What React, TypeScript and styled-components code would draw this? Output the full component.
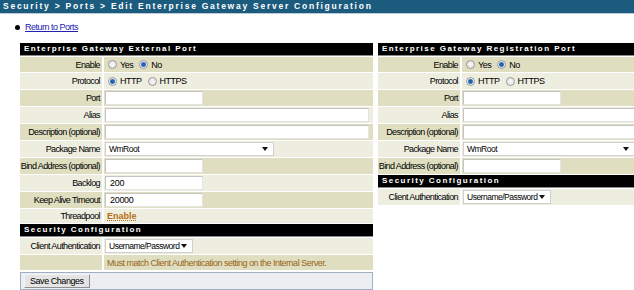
import React from "react";
import styled, { createGlobalStyle } from "styled-components";

const Global = createGlobalStyle`
  html, body { margin: 0; padding: 0; background: #fff; overflow: hidden; }
  body { font-family: "Liberation Sans", Arial, sans-serif; font-size: 9px; color: #000; }
`;

const Page = styled.div`
  width: 634px;
  height: 290px;
  overflow: hidden;
`;

const TopBar = styled.div`
  height: 13px;
  line-height: 13px;
  background: #1b5b7e;
  border-bottom: 1px solid #b8ccd8;
  color: #fff;
  font-weight: bold;
  font-size: 8.5px;
  letter-spacing: 1.75px;
  padding-left: 3px;
  white-space: nowrap;
`;

const LinkRow = styled.div`
  display: flex;
  align-items: center;
  gap: 5px;
  margin: 8px 0 0 15px;
  height: 10px;
`;

const Bullet = styled.span`
  width: 5px;
  height: 5px;
  border-radius: 50%;
  background: #000;
`;

const Link = styled.a`
  color: #2020b0;
  text-decoration: underline;
  letter-spacing: -0.5px;
`;

const Columns = styled.div`
  display: flex;
  gap: 5px;
  margin: 11px 0 0 20px;
  align-items: flex-start;
`;

const LeftCol = styled.div`
  display: flex;
  flex-direction: column;
  width: 353px;
  flex: none;
`;

const Table = styled.div`
  display: flex;
  flex-direction: column;
  gap: 1px;
  width: 353px;
  flex: none;
`;

const Header = styled.div`
  height: 12px;
  line-height: 12px;
  background: #000;
  border-bottom: 1px solid #8a8a8a;
  color: #fff;
  font-weight: bold;
  font-size: 8px;
  letter-spacing: 1.45px;
  padding-left: 4px;
  white-space: nowrap;
`;

const Row = styled.div<{ $h?: number }>`
  display: grid;
  grid-template-columns: 82px 1fr;
  column-gap: 2px;
  height: ${(p) => p.$h ?? 16}px;
`;

const Label = styled.div<{ $dark: boolean }>`
  background: ${(p) => (p.$dark ? "#dfdec1" : "#eeeee0")};
  padding-right: 2px;
  display: flex;
  align-items: center;
  justify-content: flex-end;
  white-space: nowrap;
  letter-spacing: -0.6px;
`;

const Value = styled.div<{ $dark: boolean }>`
  background: ${(p) => (p.$dark ? "#dfdec1" : "#eeeee0")};
  display: flex;
  align-items: center;
  padding-left: 1px;
  gap: 3px;
  white-space: nowrap;
  letter-spacing: -0.5px;
`;

const TextInput = styled.div<{ $w?: number }>`
  box-sizing: border-box;
  height: 14px;
  width: ${(p) => (p.$w ? `${p.$w}px` : "calc(100% - 4px)")};
  background: #fff;
  border: 1px solid #c4c4c4;
  border-right-color: #e4e4e4;
  border-bottom-color: #e4e4e4;
  padding-left: 4px;
  display: flex;
  align-items: center;
  letter-spacing: -0.3px;
`;

const Select = styled.div<{ $w: number }>`
  box-sizing: border-box;
  height: 14px;
  width: ${(p) => p.$w}px;
  background: #fff;
  border: 1px solid #d0d0d0;
  padding: 0 5px 0 3px;
  display: flex;
  align-items: center;
  justify-content: space-between;
  font-size: 8.5px;
  letter-spacing: -0.5px;
`;

const Arrow = styled.span`
  flex: none;
  width: 0;
  height: 0;
  border-left: 3px solid transparent;
  border-right: 3px solid transparent;
  border-top: 4px solid #111;
`;

const RadioWrap = styled.span<{ $first?: boolean }>`
  display: inline-flex;
  align-items: center;
  gap: 3px;
  margin-left: ${(p) => (p.$first ? 3 : 0)}px;
  margin-right: 3px;
`;

const Radio = styled.span<{ $on: boolean }>`
  box-sizing: border-box;
  width: 9px;
  height: 9px;
  border-radius: 50%;
  border: 1px solid #9a9a9a;
  background: radial-gradient(circle at 50% 50%, ${(p) =>
    p.$on ? "#2b6cc4 0, #1f55a8 1.8px, #9fc3ea 2.6px, #f4f4f4 3.2px" : "#f8f8f8 0, #e2e2e2 4px"});
`;

const Orange = styled.span`
  color: #b36d14;
  font-weight: bold;
  text-decoration: underline dotted;
  margin-left: 2px;
  letter-spacing: 0;
`;

const Note = styled.span`
  color: #9a6415;
  margin-left: 2px;
`;

const SaveBar = styled.div`
  margin-top: 2px;
  height: 18px;
  box-sizing: border-box;
  background: #eceef2;
  border: 1px solid #9fb0c6;
  display: flex;
  align-items: center;
  padding-left: 3px;
`;

const Button = styled.div`
  box-sizing: border-box;
  height: 14px;
  padding: 0 5px;
  background: #e4e4e4;
  border: 1px solid #8f8f8f;
  border-top-color: #f4f4f4;
  border-left-color: #f4f4f4;
  display: flex;
  align-items: center;
  letter-spacing: -0.45px;
`;

function Radios({ a, b, sel }: { a: string; b: string; sel: 0 | 1 }) {
  return (
    <>
      <RadioWrap $first>
        <Radio $on={sel === 0} />
        {a}
      </RadioWrap>
      <RadioWrap>
        <Radio $on={sel === 1} />
        {b}
      </RadioWrap>
    </>
  );
}

type R = { label: string; content: React.ReactNode; h?: number };

function Rows({ rows, start = true }: { rows: R[]; start?: boolean }) {
  return (
    <>
      {rows.map((r, i) => {
        const dark = start ? i % 2 === 0 : i % 2 === 1;
        return (
          <Row key={i} $h={r.h}>
            <Label $dark={dark}>{r.label}</Label>
            <Value $dark={dark}>{r.content}</Value>
          </Row>
        );
      })}
    </>
  );
}

function PortRows(selectWidth: number): R[] {
  return [
    { label: "Enable", content: <Radios a="Yes" b="No" sel={1} />, h: 15 },
    { label: "Protocol", content: <Radios a="HTTP" b="HTTPS" sel={0} /> },
    { label: "Port", content: <TextInput $w={98} /> },
    { label: "Alias", content: <TextInput /> },
    { label: "Description (optional)", content: <TextInput /> },
    {
      label: "Package Name",
      content: (
        <Select $w={selectWidth}>
          WmRoot
          <Arrow />
        </Select>
      ),
    },
    { label: "Bind Address (optional)", content: <TextInput $w={98} /> },
  ];
}

const AuthSelect = () => (
  <Select $w={88}>
    Username/Password
    <Arrow />
  </Select>
);

export default function App() {
  const leftRows: R[] = [
    ...PortRows(169),
    { label: "Backlog", content: <TextInput $w={98}>200</TextInput> },
    { label: "Keep Alive Timeout", content: <TextInput $w={98}>20000</TextInput> },
    { label: "Threadpool", content: <Orange>Enable</Orange>, h: 14 },
  ];
  const rightRows: R[] = PortRows(172);
  return (
    <Page>
      <Global />
      <TopBar>Security &gt; Ports &gt; Edit Enterprise Gateway Server Configuration</TopBar>
      <LinkRow>
        <Bullet />
        <Link href="#">Return to Ports</Link>
      </LinkRow>
      <Columns>
        <LeftCol>
          <Table>
            <Header>Enterprise Gateway External Port</Header>
            <Rows rows={leftRows} />
            <Header>Security Configuration</Header>
            <Rows
              start={false}
              rows={[
                { label: "Client Authentication", content: <AuthSelect /> },
                {
                  label: "",
                  content: <Note>Must match Client Authentication setting on the Internal Server.</Note>,
                  h: 15,
                },
              ]}
            />
          </Table>
          <SaveBar>
            <Button>Save Changes</Button>
          </SaveBar>
        </LeftCol>
        <Table>
          <Header>Enterprise Gateway Registration Port</Header>
          <Rows rows={rightRows} />
          <Header>Security Configuration</Header>
          <Rows start={false} rows={[{ label: "Client Authentication", content: <AuthSelect /> }]} />
        </Table>
      </Columns>
    </Page>
  );
}
